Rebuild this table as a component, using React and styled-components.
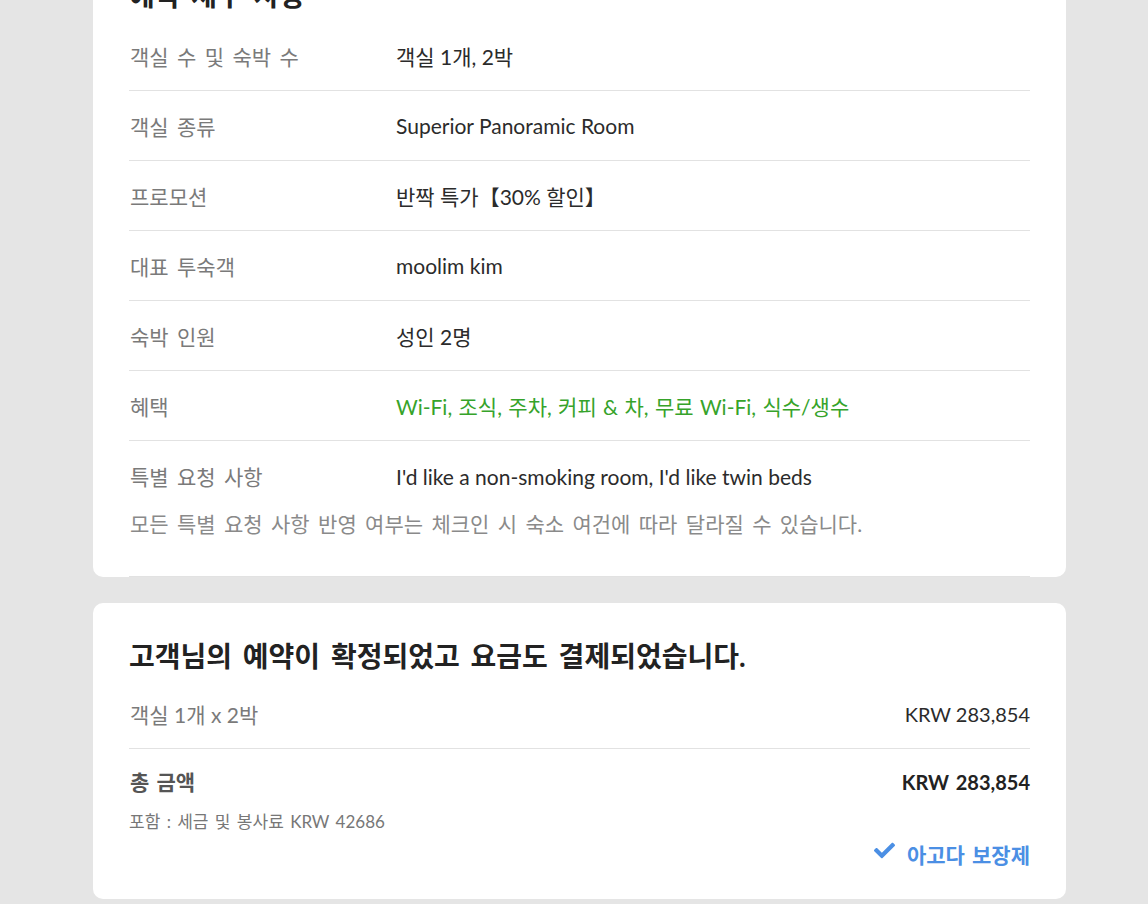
import React from "react";
import styled, { createGlobalStyle } from "styled-components";
import { FaCheck } from "react-icons/fa";

const GlobalStyle = createGlobalStyle`
  html, body {
    margin: 0;
    padding: 0;
    background: #e5e5e5;
    overflow: hidden;
  }
  body {
    font-family: Lato, "Noto Sans CJK KR", sans-serif;
    color: #333;
  }
`;

const Page = styled.div`
  display: flex;
  flex-direction: column;
  gap: 26px;
  padding-left: 93px;
  margin-top: -58px;
`;

const Card = styled.section`
  width: 973px;
  box-sizing: border-box;
  background: #fff;
  border-radius: 10px;
  padding: 36px 36px ${props => (props.$flush ? "0" : "30px")};
`;

const CardTitle = styled.h2`
  margin: 0 0 ${props => props.$gap || 6}px;
  font-size: 28px;
  line-height: 34px;
  font-weight: 700;
  word-spacing: 4px;
  color: #222;
`;

const Row = styled.div`
  display: grid;
  grid-template-columns: 267px 1fr;
  align-items: center;
  height: 70px;
  border-bottom: ${props => (props.$last ? "none" : "1px solid #e2e2e2")};
  box-sizing: border-box;
  font-size: 21px;
`;

const Label = styled.span`
  color: #7a7a7a;
  padding-left: 1px;
  word-spacing: ${props => (props.$tight ? "0" : "3px")};
`;

const Value = styled.span`
  color: ${props => (props.$green ? "#36a32a" : "#2b2b2b")};
  word-spacing: ${props => (props.$green ? "1px" : "0")};
`;

const Note = styled.p`
  margin: 0;
  padding: 0 0 39px 1px;
  font-size: 21px;
  line-height: 26px;
  word-spacing: 3px;
  color: #8a8a8a;
  border-bottom: 1px solid #e2e2e2;
`;

const PriceRow = styled.div`
  display: flex;
  justify-content: space-between;
  align-items: center;
  height: 70px;
  box-sizing: border-box;
  border-bottom: 1px solid #e2e2e2;
  font-size: 21px;
`;

const Price = styled.span`
  font-size: 20px;
  font-weight: ${props => (props.$bold ? 700 : 400)};
  color: ${props => (props.$bold ? "#222" : "#2b2b2b")};
`;

const Total = styled.div`
  display: flex;
  justify-content: space-between;
  align-items: center;
  padding-top: 20px;
  font-size: 21px;
  line-height: 26px;
  font-weight: 700;
  word-spacing: 2px;
`;

const TotalLabel = styled.span`
  color: #555;
  padding-left: 1px;
`;

const Included = styled.div`
  margin-top: 15px;
  font-size: 17px;
  line-height: 24px;
  word-spacing: 2px;
  color: #777;
`;

const Guarantee = styled.div`
  display: flex;
  justify-content: flex-end;
  align-items: center;
  gap: 12px;
  margin-top: 7px;
  line-height: 28px;
  font-size: 21px;
  font-weight: 700;
  word-spacing: 2px;
  color: #4b8fe4;

  svg {
    margin-top: -9px;
  }
`;

const details = [
  ["객실 수 및 숙박 수", "객실 1개, 2박"],
  ["객실 종류", "Superior Panoramic Room"],
  ["프로모션", "반짝 특가【30% 할인】"],
  ["대표 투숙객", "moolim kim"],
  ["숙박 인원", "성인 2명"],
  ["혜택", "Wi-Fi, 조식, 주차, 커피 & 차, 무료 Wi-Fi, 식수/생수", true],
];

export default function App() {
  return (
    <>
      <GlobalStyle />
      <Page>
        <Card $flush>
          <CardTitle $gap={9}>예약 세부 사항</CardTitle>
          {details.map(([label, value, green]) => (
            <Row key={label}>
              <Label>{label}</Label>
              <Value $green={green}>{value}</Value>
            </Row>
          ))}
          <Row $last>
            <Label>특별 요청 사항</Label>
            <Value>I'd like a non-smoking room, I'd like twin beds</Value>
          </Row>
          <Note>모든 특별 요청 사항 반영 여부는 체크인 시 숙소 여건에 따라 달라질 수 있습니다.</Note>
        </Card>

        <Card>
          <CardTitle>고객님의 예약이 확정되었고 요금도 결제되었습니다.</CardTitle>
          <PriceRow>
            <Label $tight>객실 1개 x 2박</Label>
            <Price>KRW 283,854</Price>
          </PriceRow>
          <Total>
            <TotalLabel>총 금액</TotalLabel>
            <Price $bold>KRW 283,854</Price>
          </Total>
          <Included>포함 : 세금 및 봉사료 KRW 42686</Included>
          <Guarantee>
            <FaCheck size={21} />
            아고다 보장제
          </Guarantee>
        </Card>
      </Page>
    </>
  );
}
